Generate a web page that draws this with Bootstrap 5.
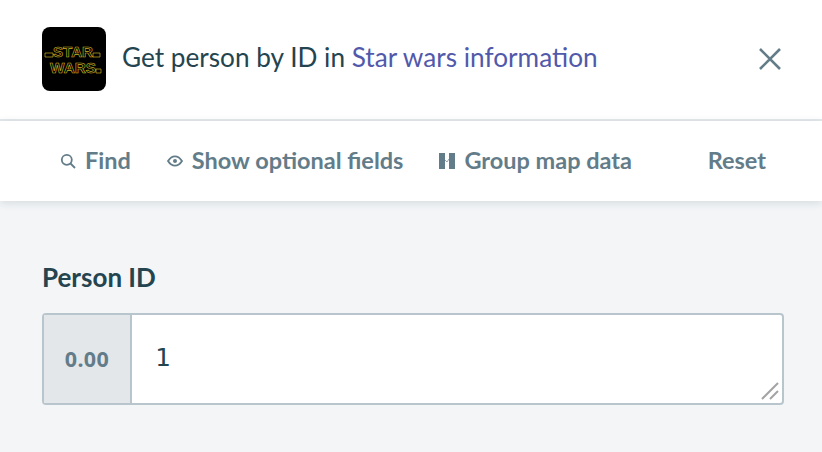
<!DOCTYPE html>
<html lang="en">
<head>
<meta charset="UTF-8">
<title>Get person by ID</title>
<link href="https://cdn.jsdelivr.net/npm/bootstrap@5.3.2/dist/css/bootstrap.min.css" rel="stylesheet">
<style>
    body { background: #f3f5f7; font-family: Lato, sans-serif; color: #24444f; overflow: hidden; }
    .top-bar { height: 121px; padding: 0 41px 1px 42px; border-bottom: 2px solid #e4e8eb; background: #fff; }
    .app-logo { width: 64px; height: 64px; border-radius: 8px; background: #000; margin-right: 16px; }
    .app-logo text { font-family: "Liberation Sans", sans-serif; font-weight: 700; font-size: 14px; fill: none; stroke: #cdb21f; stroke-width: .6px; }
    .app-logo path { fill: none; stroke: #cdb21f; stroke-width: .7px; }
    .top-title { font-size: 26.2px; line-height: 32px; margin: 0 0 4px; font-weight: 400; }
    .top-title a { color: #5159ab; text-decoration: none; }
    .tool-bar { height: 80px; padding: 0 56px 0 60px; background: #fff; box-shadow: 0 2px 8px rgba(36, 68, 79, .14); color: #637c89; font-size: 23.5px; font-weight: 700; position: relative; }
    .tool-group { gap: 36px; }
    .tool-item { gap: 9px; }
    .field-area { padding: 57px 38px 0 42px; }
    .field-label { font-size: 26px; font-weight: 700; line-height: 38px; margin-bottom: 17px; display: block; }
    .field-box { height: 92px; border: 2px solid #b9c5cd; border-radius: 4px; background: #fff; position: relative; }
    .field-type { width: 88px; background: #e3e7ea; border-right: 2px solid #b9c5cd; color: #637c89; font-size: 21.5px; font-weight: 700; font-family: "Noto Sans", sans-serif; letter-spacing: .4px; }
    .field-value { padding: 27px 23px; font-size: 25.5px; line-height: 30px; font-family: "DejaVu Sans Mono", monospace; }
    .grip { position: absolute; right: 3px; bottom: 3px; }
</style>
</head>
<body>
    <div class="top-bar d-flex align-items-center">
        <svg class="app-logo flex-shrink-0" viewBox="0 0 64 64">
            <text x="31" y="30" text-anchor="middle" textLength="40" lengthAdjust="spacingAndGlyphs">STAR</text>
            <text x="31" y="46" text-anchor="middle" textLength="46" lengthAdjust="spacingAndGlyphs">WARS</text>
            <path d="M3 26h8v4H3zM51 26h7v4h-7zM54 42h5v4h-5z"/>
        </svg>
        <h1 class="top-title flex-grow-1">Get person by ID in <a href="#">Star wars information</a></h1>
        <svg width="22" height="22" viewBox="0 0 22 22" fill="none" stroke="#637c89" stroke-width="2.600"><path d="M1 1l20 20M21 1L1 21"/></svg>
    </div>

    <div class="tool-bar d-flex align-items-center justify-content-between">
        <div class="tool-group d-flex align-items-center">
            <div class="tool-item d-flex align-items-center">
                <svg width="16" height="16" viewBox="0 0 16 16" fill="none" stroke="#637c89" stroke-width="1.8"><circle cx="6.8" cy="6.8" r="5"/><path d="M10.5 10.5L15 15"/></svg>
                <span>Find</span>
            </div>
            <div class="tool-item d-flex align-items-center">
                <svg width="16" height="12" viewBox="0 0 16 12" fill="none" stroke="#637c89" stroke-width="1.800"><path d="M1 6c2-3.200 4.300-4.700 7-4.700S13 2.800 15 6c-2 3.200-4.300 4.700-7 4.700S3 9.200 1 6z"/><circle cx="8" cy="6" r="2" fill="#637c89" stroke="none"/></svg>
                <span>Show optional fields</span>
            </div>
            <div class="tool-item d-flex align-items-center">
                <svg width="16" height="16" viewBox="0 0 16 16" fill="#637c89"><rect width="6" height="16"/><rect x="10" width="6" height="16"/><path d="M6 7l2 2 2-3" fill="none" stroke="#637c89" stroke-width=".7"/></svg>
                <span>Group map data</span>
            </div>
        </div>
        <span>Reset</span>
    </div>

    <div class="field-area">
        <label class="field-label">Person ID</label>
        <div class="field-box d-flex">
            <div class="field-type d-flex align-items-center justify-content-center">0.00</div>
            <div class="field-value flex-grow-1">1</div>
            <svg class="grip" width="18" height="18" viewBox="0 0 18 18" stroke="#a3a3a3" stroke-width="2"><path d="M1 17L17 1M9 17l8-8"/></svg>
        </div>
    </div>
</body>
</html>
